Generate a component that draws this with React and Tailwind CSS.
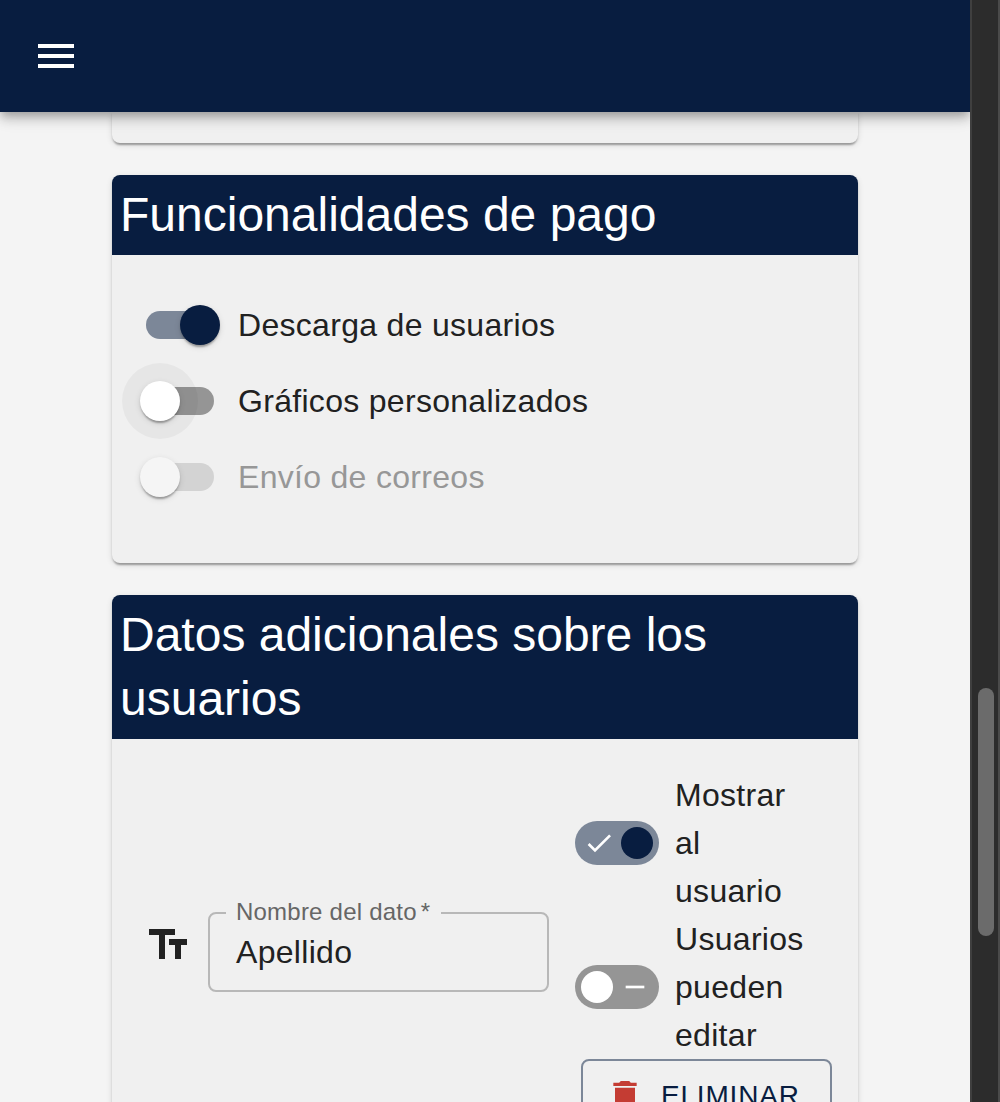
const cardShadow =
  'shadow-[0_4px_2px_-2px_rgba(0,0,0,0.2),0_2px_2px_0_rgba(0,0,0,0.14),0_2px_6px_0_rgba(0,0,0,0.12)]';
const thumbShadow =
  'shadow-[0_4px_2px_-2px_rgba(0,0,0,0.2),0_2px_2px_0_rgba(0,0,0,0.14),0_2px_6px_0_rgba(0,0,0,0.12)]';

function Icon({ d, className }) {
  return (
    <svg viewBox="0 0 24 24" fill="currentColor" className={className} aria-hidden="true">
      <path d={d} />
    </svg>
  );
}

function Card({ title, children, className = '' }) {
  return (
    <section className={`shrink-0 rounded-lg bg-[#f0f0f0] ${cardShadow} ${className}`}>
      <h2 className="rounded-t-lg bg-[#081d40] p-2 text-[48px] leading-[64px] text-white">{title}</h2>
      {children}
    </section>
  );
}

function Switch({ checked, disabled, focused }) {
  return (
    <span className="relative flex h-[76px] w-[116px] shrink-0 items-center px-6">
      <span
        className={`h-7 w-full rounded-full ${
          checked ? 'bg-[#7c8798]' : disabled ? 'bg-[#d3d3d3]' : 'bg-[#959595]'
        }`}
      />
      <span
        className={`absolute top-0 flex size-[76px] items-center justify-center rounded-full ${
          checked ? 'left-10' : 'left-0'
        } ${focused ? 'bg-black/4' : ''}`}
      >
        <span
          className={`size-10 rounded-full ${thumbShadow} ${
            checked ? 'bg-[#081d40]' : disabled ? 'bg-[#f5f5f5]' : 'bg-white'
          }`}
        />
      </span>
    </span>
  );
}

function SwitchRow({ label, ...props }) {
  return (
    <label className="-ml-[22px] flex items-center">
      <Switch {...props} />
      <span className={`text-[32px] leading-[48px] tracking-[0.3px] ${props.disabled ? 'text-[#979797]' : ''}`}>
        {label}
      </span>
    </label>
  );
}

function PillSwitchRow({ label, checked }) {
  return (
    <label className="flex items-center gap-4">
      <span
        className={`flex h-11 w-[84px] shrink-0 items-center rounded-full ${
          checked ? 'bg-[#7c8798] pr-1.5 pl-2' : 'flex-row-reverse bg-[#959595] pr-2 pl-1.5'
        } justify-between`}
      >
        <Icon
          className="size-8 text-white"
          d={checked ? 'M21,7L9,19L3.5,13.5L4.91,12.09L9,16.17L19.59,5.59L21,7Z' : 'M19,13H5V11H19V13Z'}
        />
        <span className={`size-8 rounded-full ${checked ? 'bg-[#081d40]' : 'bg-white'}`} />
      </span>
      <span className="w-[134px] text-[32px] leading-[48px] tracking-[0.3px]">{label}</span>
    </label>
  );
}

export default function App() {
  return (
    <div className="flex h-[1102px] w-[1000px] overflow-hidden bg-[#f4f4f4] font-['Liberation_Sans',Arial,sans-serif] text-[#212121]">
      <div className="flex w-[970px] flex-col overflow-hidden">
        <header className="relative z-10 flex h-28 shrink-0 items-center bg-[#081d40] px-8 text-white shadow-[0_4px_8px_-2px_rgba(0,0,0,0.2),0_8px_10px_0_rgba(0,0,0,0.14),0_2px_20px_0_rgba(0,0,0,0.12)]">
          <button type="button" aria-label="Menú">
            <Icon className="size-12" d="M3 18h18v-2H3v2zm0-5h18v-2H3v2zm0-7v2h18V6H3z" />
          </button>
        </header>

        <main className="flex min-h-0 flex-1 flex-col gap-8 px-28">
          <div className={`h-[31px] shrink-0 rounded-b-lg bg-[#f0f0f0] ${cardShadow}`} />

          <Card title="Funcionalidades de pago">
            <div className="flex flex-col px-8 pt-8 pb-12">
              <SwitchRow label="Descarga de usuarios" checked />
              <SwitchRow label="Gráficos personalizados" focused />
              <SwitchRow label="Envío de correos" disabled />
            </div>
          </Card>

          <Card title="Datos adicionales sobre los usuarios">
            <div className="flex items-center px-8 pt-8 pb-8">
              <Icon
                className="mr-4 mb-3.5 size-12 shrink-0"
                d="M2.5 4v3h5v12h3V7h5V4h-13zm19 5h-9v3h3v7h3v-7h3V9z"
              />
              <div className="relative flex h-20 w-[341px] shrink-0 items-center rounded-lg border-2 border-[#b8b8b8] px-[26px]">
                <span className="absolute -top-[19px] left-4 bg-[#f0f0f0] pr-[11px] pl-2.5 text-[24px] leading-[34px] tracking-[0.22px] whitespace-nowrap text-[#666666]">
                  Nombre del dato<span className="ml-1">*</span>
                </span>
                <span className="text-[32px] leading-[46px] tracking-[0.3px]">Apellido</span>
              </div>
              <div className="ml-[26px] flex flex-col items-start">
                <PillSwitchRow label="Mostrar al usuario" checked />
                <PillSwitchRow label="Usuarios pueden editar" />
                <button
                  type="button"
                  className="ml-1.5 flex h-[73px] items-center gap-4 rounded-lg border-2 border-[#7c8798] pr-[30px] pl-[22px] text-[28px] leading-[49px] tracking-[0.8px] text-[#081d40]"
                >
                  <Icon
                    className="size-10 text-[#c43c33]"
                    d="M6 19c0 1.1.9 2 2 2h8c1.1 0 2-.9 2-2V7H6v12zM19 4h-3.5l-1-1h-5l-1 1H5v2h14V4z"
                  />
                  ELIMINAR
                </button>
              </div>
            </div>
          </Card>
        </main>
      </div>

      <div className="flex w-[30px] flex-col border-r-2 border-l-2 border-r-[#4a4a4a] border-l-[#3f3f3f] bg-[#2c2c2c] pt-[688px] pl-1.5">
        <div className="h-[248px] w-4 rounded-full bg-[#6b6b6b]" />
      </div>
    </div>
  );
}
